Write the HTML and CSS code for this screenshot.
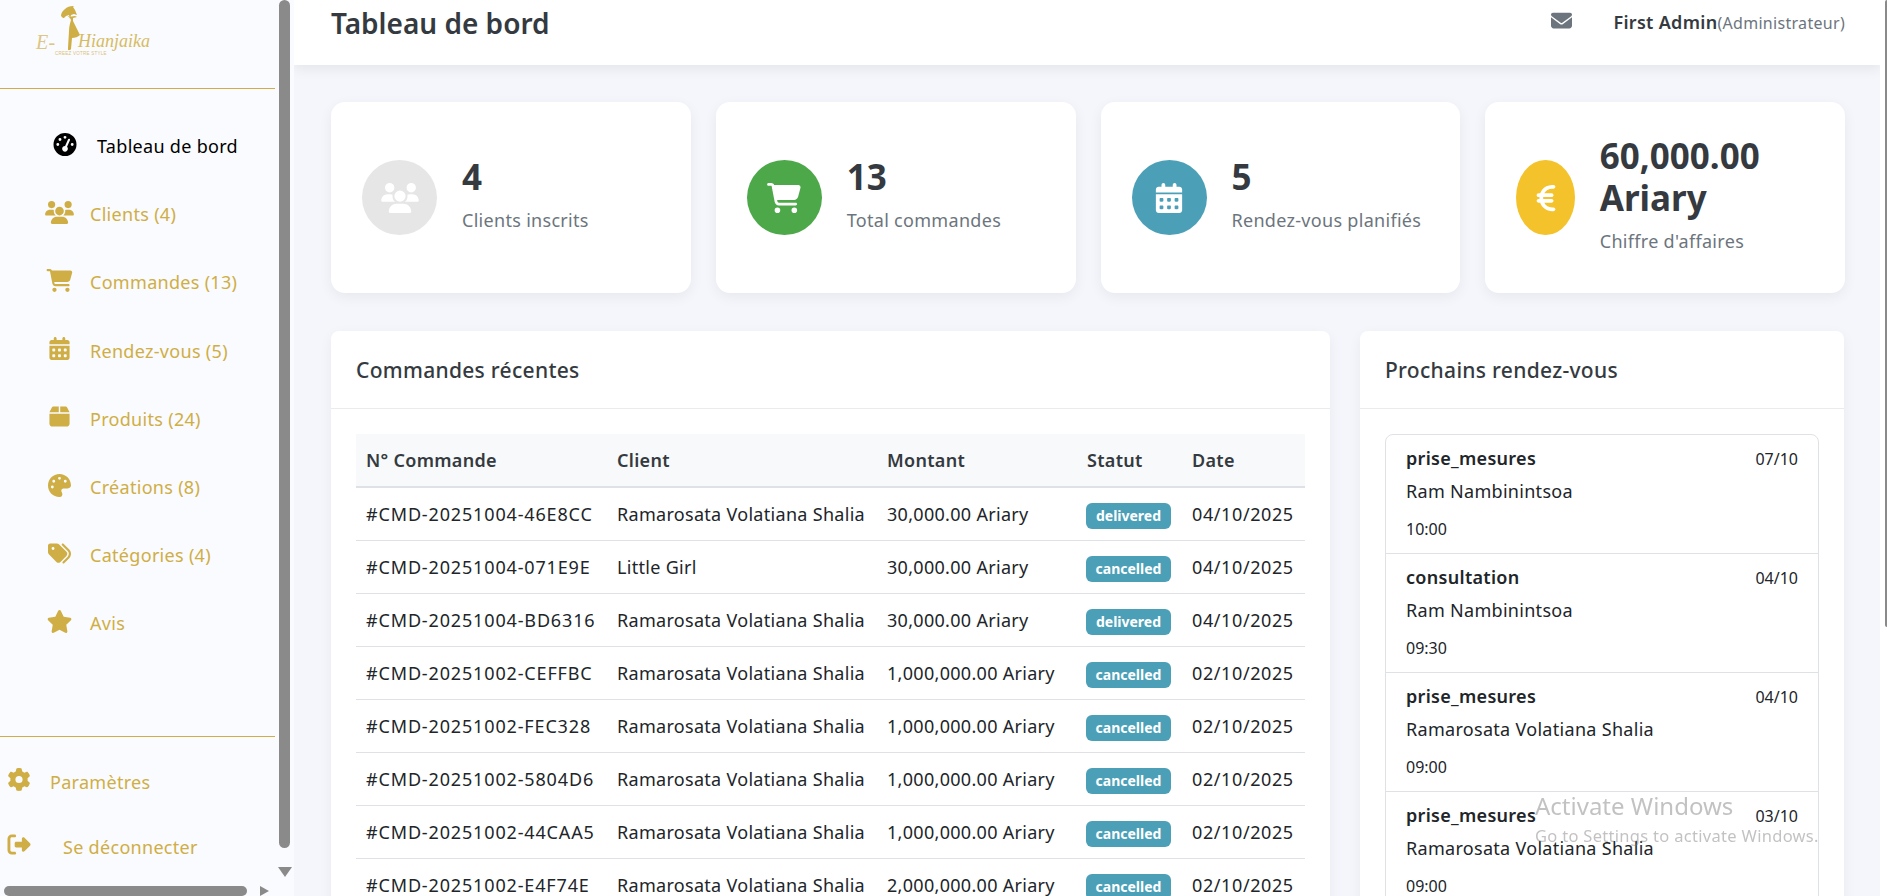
FILE: index.html
```html
<!DOCTYPE html>
<html lang="fr">
<head>
  <meta charset="UTF-8">
  <title>Tableau de bord</title>
  <link rel="stylesheet" href="styles.css">
</head>
<body>
  <svg class="sprite" xmlns="http://www.w3.org/2000/svg">
    <symbol id="i-gauge" viewBox="0 0 512 512"><path d="M0 256a256 256 0 1 1 512 0A256 256 0 1 1 0 256zM288 96a32 32 0 1 0 -64 0 32 32 0 1 0 64 0zM256 416c35.3 0 64-28.7 64-64c0-17.4-6.9-33.1-18.1-44.6L366 161.7c5.3-12.1-.2-26.3-12.3-31.6s-26.3 .2-31.6 12.3L257.9 288c-.6 0-1.3 0-1.9 0c-35.3 0-64 28.7-64 64s28.7 64 64 64zM176 144a32 32 0 1 0 -64 0 32 32 0 1 0 64 0zM96 288a32 32 0 1 0 0-64 32 32 0 1 0 0 64zm352-32a32 32 0 1 0 -64 0 32 32 0 1 0 64 0z"/></symbol>
    <symbol id="i-users" viewBox="0 0 640 512"><path d="M144 0a80 80 0 1 1 0 160A80 80 0 1 1 144 0zM512 0a80 80 0 1 1 0 160A80 80 0 1 1 512 0zM0 298.7C0 239.8 47.8 192 106.7 192h42.7c15.9 0 31 3.5 44.6 9.7c-1.3 7.2-1.9 14.7-1.9 22.3c0 38.2 16.8 72.5 43.3 96c-.2 0-.4 0-.7 0H21.3C9.6 320 0 310.4 0 298.7zM405.3 320c-.2 0-.4 0-.7 0c26.6-23.5 43.3-57.8 43.3-96c0-7.6-.7-15-1.9-22.3c13.6-6.3 28.7-9.7 44.6-9.7h42.7C592.2 192 640 239.8 640 298.7c0 11.8-9.6 21.3-21.3 21.3H405.3zM224 224a96 96 0 1 1 192 0 96 96 0 1 1 -192 0zM128 485.3C128 411.7 187.7 352 261.3 352H378.7C452.3 352 512 411.7 512 485.3c0 14.7-11.9 26.7-26.7 26.7H154.7c-14.7 0-26.7-11.9-26.7-26.7z"/></symbol>
    <symbol id="i-cart" viewBox="0 0 576 512"><path d="M0 24C0 10.7 10.7 0 24 0H69.5c22 0 41.5 12.8 50.6 32h411c26.3 0 45.5 25 38.6 50.4l-41 152.3c-8.5 31.4-37 53.3-69.5 53.3H170.7l5.4 28.5c2.2 11.3 12.1 19.5 23.6 19.5H488c13.3 0 24 10.7 24 24s-10.7 24-24 24H199.7c-34.6 0-64.3-24.6-70.7-58.5L77.4 54.5c-.7-3.8-4-6.5-7.9-6.5H24C10.7 48 0 37.3 0 24zM128 464a48 48 0 1 1 96 0 48 48 0 1 1 -96 0zm336-48a48 48 0 1 1 0 96 48 48 0 1 1 0-96z"/></symbol>
    <symbol id="i-calendar" viewBox="0 0 448 512"><path d="M128 0c17.7 0 32 14.3 32 32V64H288V32c0-17.7 14.3-32 32-32s32 14.3 32 32V64h48c26.5 0 48 21.5 48 48v48H0V112C0 85.5 21.5 64 48 64H96V32c0-17.7 14.3-32 32-32zM0 192H448V464c0 26.5-21.5 48-48 48H48c-26.5 0-48-21.5-48-48V192zm64 80v32c0 8.8 7.2 16 16 16h32c8.8 0 16-7.2 16-16V272c0-8.8-7.2-16-16-16H80c-8.8 0-16 7.2-16 16zm128 0v32c0 8.8 7.2 16 16 16h32c8.8 0 16-7.2 16-16V272c0-8.8-7.2-16-16-16H208c-8.8 0-16 7.2-16 16zm144-16c-8.8 0-16 7.2-16 16v32c0 8.8 7.2 16 16 16h32c8.8 0 16-7.2 16-16V272c0-8.8-7.2-16-16-16H336zM64 400v32c0 8.8 7.2 16 16 16h32c8.8 0 16-7.2 16-16V400c0-8.8-7.2-16-16-16H80c-8.8 0-16 7.2-16 16zm144-16c-8.8 0-16 7.2-16 16v32c0 8.8 7.2 16 16 16h32c8.8 0 16-7.2 16-16V400c0-8.8-7.2-16-16-16H208zm112 16v32c0 8.8 7.2 16 16 16h32c8.8 0 16-7.2 16-16V400c0-8.8-7.2-16-16-16H336c-8.8 0-16 7.2-16 16z"/></symbol>
    <symbol id="i-box" viewBox="0 0 448 512"><path d="M50.7 58.5L0 160H208V32H93.7C75.5 32 58.9 42.3 50.7 58.5zM240 160H448L397.3 58.5C389.1 42.3 372.5 32 354.3 32H240V160zm208 32H0V416c0 35.3 28.7 64 64 64H384c35.3 0 64-28.7 64-64V192z"/></symbol>
    <symbol id="i-palette" viewBox="0 0 512 512"><path d="M512 256c0 .9 0 1.8 0 2.7c-.4 36.5-33.6 61.3-70.1 61.3H344c-26.5 0-48 21.5-48 48c0 3.4 .4 6.7 1 9.9c2.1 10.2 6.5 20 10.8 29.9c6.1 13.8 12.1 27.5 12.1 42c0 31.8-21.6 60.7-53.4 62c-3.5 .1-7 .2-10.6 .2C114.6 512 0 397.4 0 256S114.6 0 256 0S512 114.6 512 256zM128 288a32 32 0 1 0 -64 0 32 32 0 1 0 64 0zm0-96a32 32 0 1 0 0-64 32 32 0 1 0 0 64zM288 96a32 32 0 1 0 -64 0 32 32 0 1 0 64 0zm96 96a32 32 0 1 0 0-64 32 32 0 1 0 0 64z"/></symbol>
    <symbol id="i-tags" viewBox="0 0 512 512"><path d="M345 39.1L472.8 168.4c52.4 53 52.4 138.2 0 191.2L360.8 472.9c-9.3 9.4-24.5 9.5-33.9 .2s-9.5-24.5-.2-33.9L438.6 325.9c33.9-34.3 33.9-89.4 0-123.7L310.9 72.9c-9.3-9.4-9.2-24.6 .2-33.9s24.6-9.2 33.9 .2zM0 229.5V80C0 53.5 21.5 32 48 32H197.5c17 0 33.3 6.7 45.3 18.7l168 168c25 25 25 65.5 0 90.5L277.3 442.7c-25 25-65.5 25-90.5 0l-168-168C6.7 262.7 0 246.5 0 229.5zM144 144a32 32 0 1 0 -64 0 32 32 0 1 0 64 0z"/></symbol>
    <symbol id="i-star" viewBox="0 0 576 512"><path d="M316.9 18C311.6 7 300.4 0 288.1 0s-23.4 7-28.8 18L195 150.3 51.4 171.5c-12 1.8-22 10.2-25.7 21.7s-.7 24.2 7.9 32.7L137.8 329 113.2 474.7c-2 12 3 24.2 12.9 31.3s23 8 33.8 2.3l128.3-68.5 128.3 68.5c10.8 5.7 23.9 4.9 33.8-2.3s14.9-19.3 12.9-31.3L438.5 329 542.7 225.9c8.6-8.5 11.7-21.2 7.9-32.7s-13.7-19.9-25.7-21.7L381.2 150.3 316.9 18z"/></symbol>
    <symbol id="i-gear" viewBox="0 0 512 512"><path d="M495.9 166.6c3.2 8.7 .5 18.4-6.4 24.6l-43.3 39.4c1.1 8.3 1.7 16.8 1.7 25.4s-.6 17.1-1.7 25.4l43.3 39.4c6.9 6.2 9.6 15.9 6.4 24.6c-4.4 11.9-9.7 23.3-15.8 34.3l-4.7 8.1c-6.6 11-14 21.4-22.1 31.2c-5.9 7.2-15.7 9.6-24.5 6.8l-55.7-17.7c-13.4 10.3-28.2 18.9-44 25.4l-12.5 57.1c-2 9.1-9 16.3-18.2 17.8c-13.8 2.3-28 3.5-42.5 3.5s-28.7-1.2-42.5-3.5c-9.2-1.5-16.2-8.7-18.2-17.8l-12.5-57.1c-15.8-6.5-30.6-15.1-44-25.4L83.1 425.9c-8.8 2.8-18.6 .3-24.5-6.8c-8.1-9.8-15.5-20.2-22.1-31.2l-4.7-8.1c-6.1-11-11.4-22.4-15.8-34.3c-3.2-8.7-.5-18.4 6.4-24.6l43.3-39.4C64.6 273.1 64 264.6 64 256s.6-17.1 1.7-25.4L22.4 191.2c-6.9-6.2-9.6-15.9-6.4-24.6c4.4-11.9 9.7-23.3 15.8-34.3l4.7-8.1c6.6-11 14-21.4 22.1-31.2c5.9-7.2 15.7-9.6 24.5-6.8l55.7 17.7c13.4-10.3 28.2-18.9 44-25.4l12.5-57.1c2-9.1 9-16.3 18.2-17.8C227.3 1.2 241.5 0 256 0s28.7 1.2 42.5 3.5c9.2 1.5 16.2 8.7 18.2 17.8l12.5 57.1c15.8 6.5 30.6 15.1 44 25.4l55.7-17.7c8.8-2.8 18.6-.3 24.5 6.8c8.1 9.8 15.5 20.2 22.1 31.2l4.7 8.1c6.1 11 11.4 22.4 15.8 34.3zM256 336a80 80 0 1 0 0-160 80 80 0 1 0 0 160z"/></symbol>
    <symbol id="i-out" viewBox="0 0 512 512"><path d="M377.9 105.9L500.7 228.7c7.2 7.2 11.3 17.1 11.3 27.3s-4.1 20.1-11.3 27.3L377.9 406.1c-6.4 6.4-15 9.9-24 9.9c-18.7 0-33.9-15.2-33.9-33.9l0-62.1-128 0c-17.7 0-32-14.3-32-32l0-64c0-17.7 14.3-32 32-32l128 0 0-62.1c0-18.7 15.2-33.9 33.9-33.9c9 0 17.6 3.6 24 9.9zM160 96L96 96c-17.7 0-32 14.3-32 32l0 256c0 17.7 14.3 32 32 32l64 0c17.7 0 32 14.3 32 32s-14.3 32-32 32l-64 0c-53 0-96-43-96-96L0 128C0 75 43 32 96 32l64 0c17.7 0 32 14.3 32 32s-14.3 32-32 32z"/></symbol>
    <symbol id="i-mail" viewBox="0 0 512 512"><path d="M48 64C21.5 64 0 85.5 0 112c0 15.1 7.1 29.3 19.2 38.4L236.8 313.6c11.4 8.5 27 8.5 38.4 0L492.8 150.4c12.1-9.1 19.2-23.3 19.2-38.4c0-26.5-21.5-48-48-48H48zM0 176V384c0 35.3 28.7 64 64 64H448c35.3 0 64-28.7 64-64V176L294.4 339.2c-22.8 17.1-52 17.1-76.8 0L0 176z"/></symbol>
    <symbol id="i-euro" viewBox="0 0 320 512"><path d="M48.1 240c-.1 2.7-.1 5.3-.1 8v16c0 2.7 0 5.3 .1 8H32c-17.7 0-32 14.3-32 32s14.3 32 32 32H60.3C89.9 419.9 170 480 264 480h24c17.7 0 32-14.3 32-32s-14.3-32-32-32H264c-57.9 0-108.2-32.4-133.9-80H256c17.7 0 32-14.3 32-32s-14.3-32-32-32H112.2c-.1-2.6-.2-5.3-.2-8V248c0-2.7 .1-5.4 .2-8H256c17.7 0 32-14.3 32-32s-14.3-32-32-32H130.1c25.7-47.6 76-80 133.9-80h24c17.7 0 32-14.3 32-32s-14.3-32-32-32H264C170 32 89.9 92.1 60.3 176H32c-17.7 0-32 14.3-32 32s14.3 32 32 32H48.1z"/></symbol>
    <!-- lady with a parasol from the logo -->
    <symbol id="i-figure" viewBox="0 0 24 46">
      <path d="M1 11C1 6 7 1 13 1c1 0 1 1 0 1l2 3 2 5-3-1-3 1-1 4-1-4-3 1-2 2-1 0z"/>
      <path d="M8 12l7-1 2 1-4 1 0 3 1 2 1 2 5 10c-2 2-5 3-8 3l-1 11c0 1-2 1-3 1l0-2 1-17c0-4 1-8 2-11l-1-2-2-2z"/>
    </symbol>
  </svg>

  <div class="app">
    <aside class="sidebar">
      <div class="logo">
        <div class="logo-row">
          <span class="logo-e">E-</span>
          <svg class="logo-figure"><use href="#i-figure"/></svg>
          <span class="logo-name">Hianjaika</span>
        </div>
        <div class="logo-tag">CREEZ VOTRE STYLE</div>
      </div>

      <nav class="side-nav">
        <a class="side-link active"><svg class="ic"><use href="#i-gauge"/></svg><span>Tableau de bord</span></a>
        <a class="side-link"><svg class="ic"><use href="#i-users"/></svg><span>Clients (4)</span></a>
        <a class="side-link"><svg class="ic"><use href="#i-cart"/></svg><span>Commandes (13)</span></a>
        <a class="side-link"><svg class="ic"><use href="#i-calendar"/></svg><span>Rendez-vous (5)</span></a>
        <a class="side-link"><svg class="ic"><use href="#i-box"/></svg><span>Produits (24)</span></a>
        <a class="side-link"><svg class="ic"><use href="#i-palette"/></svg><span>Créations (8)</span></a>
        <a class="side-link"><svg class="ic"><use href="#i-tags"/></svg><span>Catégories (4)</span></a>
        <a class="side-link"><svg class="ic"><use href="#i-star"/></svg><span>Avis</span></a>
      </nav>

      <div class="side-foot">
        <a class="foot-link"><svg class="ic"><use href="#i-gear"/></svg><span>Paramètres</span></a>
        <a class="foot-link logout"><svg class="ic"><use href="#i-out"/></svg><span>Se déconnecter</span></a>
      </div>

      <!-- browser scrollbars of the sidebar -->
      <div class="sb-thumb-v"></div>
      <div class="sb-arrow-down"></div>
      <div class="sb-thumb-h"></div>
      <div class="sb-arrow-right"></div>
    </aside>

    <main class="main">
      <header class="topbar">
        <h1>Tableau de bord</h1>
        <div class="top-right">
          <svg class="ic-mail"><use href="#i-mail"/></svg>
          <div class="user"><strong>First Admin</strong><span>(Administrateur)</span></div>
        </div>
      </header>

      <section class="stats">
        <div class="stat">
          <div class="stat-icon grey"><svg><use href="#i-users"/></svg></div>
          <div class="stat-text"><div class="stat-num">4</div><div class="stat-label">Clients inscrits</div></div>
        </div>
        <div class="stat">
          <div class="stat-icon green"><svg><use href="#i-cart"/></svg></div>
          <div class="stat-text"><div class="stat-num">13</div><div class="stat-label">Total commandes</div></div>
        </div>
        <div class="stat">
          <div class="stat-icon teal"><svg><use href="#i-calendar"/></svg></div>
          <div class="stat-text"><div class="stat-num">5</div><div class="stat-label">Rendez-vous planifiés</div></div>
        </div>
        <div class="stat">
          <div class="stat-icon yellow"><svg><use href="#i-euro"/></svg></div>
          <div class="stat-text"><div class="stat-num">60,000.00 Ariary</div><div class="stat-label">Chiffre d'affaires</div></div>
        </div>
      </section>

      <section class="panels">
        <div class="panel">
          <div class="panel-head">Commandes récentes</div>
          <div class="panel-body">
            <table class="orders">
              <colgroup><col class="c1"><col class="c2"><col class="c3"><col class="c4"><col class="c5"></colgroup>
              <thead>
                <tr><th>N° Commande</th><th>Client</th><th>Montant</th><th>Statut</th><th>Date</th></tr>
              </thead>
              <tbody>
                <tr><td class="ref">#CMD-20251004-46E8CC</td><td>Ramarosata Volatiana Shalia</td><td>30,000.00 Ariary</td><td><span class="badge">delivered</span></td><td class="date">04/10/2025</td></tr>
                <tr><td class="ref">#CMD-20251004-071E9E</td><td>Little Girl</td><td>30,000.00 Ariary</td><td><span class="badge">cancelled</span></td><td class="date">04/10/2025</td></tr>
                <tr><td class="ref">#CMD-20251004-BD6316</td><td>Ramarosata Volatiana Shalia</td><td>30,000.00 Ariary</td><td><span class="badge">delivered</span></td><td class="date">04/10/2025</td></tr>
                <tr><td class="ref">#CMD-20251002-CEFFBC</td><td>Ramarosata Volatiana Shalia</td><td>1,000,000.00 Ariary</td><td><span class="badge">cancelled</span></td><td class="date">02/10/2025</td></tr>
                <tr><td class="ref">#CMD-20251002-FEC328</td><td>Ramarosata Volatiana Shalia</td><td>1,000,000.00 Ariary</td><td><span class="badge">cancelled</span></td><td class="date">02/10/2025</td></tr>
                <tr><td class="ref">#CMD-20251002-5804D6</td><td>Ramarosata Volatiana Shalia</td><td>1,000,000.00 Ariary</td><td><span class="badge">cancelled</span></td><td class="date">02/10/2025</td></tr>
                <tr><td class="ref">#CMD-20251002-44CAA5</td><td>Ramarosata Volatiana Shalia</td><td>1,000,000.00 Ariary</td><td><span class="badge">cancelled</span></td><td class="date">02/10/2025</td></tr>
                <tr><td class="ref">#CMD-20251002-E4F74E</td><td>Ramarosata Volatiana Shalia</td><td>2,000,000.00 Ariary</td><td><span class="badge">cancelled</span></td><td class="date">02/10/2025</td></tr>
              </tbody>
            </table>
          </div>
        </div>

        <div class="panel side-panel">
          <div class="panel-head">Prochains rendez-vous</div>
          <div class="panel-body">
            <div class="rdv-list">
              <div class="rdv">
                <div class="rdv-top"><strong>prise_mesures</strong><small>07/10</small></div>
                <p>Ram Nambinintsoa</p>
                <small>10:00</small>
              </div>
              <div class="rdv">
                <div class="rdv-top"><strong>consultation</strong><small>04/10</small></div>
                <p>Ram Nambinintsoa</p>
                <small>09:30</small>
              </div>
              <div class="rdv">
                <div class="rdv-top"><strong>prise_mesures</strong><small>04/10</small></div>
                <p>Ramarosata Volatiana Shalia</p>
                <small>09:00</small>
              </div>
              <div class="rdv">
                <div class="rdv-top"><strong>prise_mesures</strong><small>03/10</small></div>
                <p>Ramarosata Volatiana Shalia</p>
                <small>09:00</small>
              </div>
            </div>
          </div>
        </div>
      </section>

      <div class="page-scroll"><div class="page-thumb"></div></div>
    </main>
  </div>

  <div class="watermark">
    <div class="wm-title">Activate Windows</div>
    <div class="wm-sub">Go to Settings to activate Windows.</div>
  </div>
</body>
</html>
```

FILE: styles.css
```css
* { box-sizing: border-box; }
html, body { margin: 0; height: 100%; overflow: hidden; }
body { font-family: "Noto Sans", "Open Sans", Arial, sans-serif; font-size: 18px; line-height: 24px; letter-spacing: .3px; color: #212529; background: #f4f6fb; }
.sprite { display: none; }
svg { fill: currentColor; }

.app { display: flex; height: 896px; }

/* sidebar */
.sidebar { position: relative; flex: 0 0 294px; width: 294px; height: 896px; background: #fafbfe; color: #cfae45; overflow: hidden; }
.logo { width: 275px; height: 89px; border-bottom: 1px solid #cfae45; padding: 5px 0 0 36px; }
.logo-row { display: flex; align-items: flex-end; height: 46px; }
.logo-e { font-family: "Liberation Serif", serif; font-style: italic; font-size: 20px; line-height: 18px; width: 24px; color: #dcc681; }
.logo-figure { flex: 0 0 24px; width: 24px; height: 46px; color: #cfae45; }
.logo-name { font-family: "Liberation Serif", serif; font-style: italic; font-size: 18px; line-height: 20px; letter-spacing: 0; margin-left: -6px; color: #d6bb63; }
.logo-tag { font-family: "Liberation Sans", sans-serif; font-size: 4.5px; line-height: 6px; letter-spacing: .25px; margin: 0 0 0 19px; color: #d9c078; }

.side-nav { display: flex; flex-direction: column; padding-top: 23px; }
.side-link { display: flex; align-items: center; height: 68.2px; padding-left: 45px; }
.side-link .ic { flex: 0 0 29px; width: 29px; height: 23px; margin-top: -4px; }
.side-link span { margin-left: 16px; }
.side-link.active { color: #000; padding-left: 53px; }
.side-link.active .ic { flex-basis: 24px; width: 24px; }
.side-link.active span { margin-left: 20px; }

.side-foot { position: absolute; left: 0; right: 19px; top: 736px; border-top: 1px solid #cfae45; padding-top: 12px; }
.foot-link { display: flex; align-items: center; height: 65px; padding-left: 7px; }
.foot-link .ic { flex: 0 0 24px; width: 24px; height: 23px; margin-top: -4px; }
.foot-link span { margin-left: 19px; }
.foot-link.logout span { margin-left: 32px; }

.sb-thumb-v { position: absolute; left: 279px; top: 0; width: 11px; height: 848px; background: #8a8a8a; border-radius: 6px; }
.sb-arrow-down { position: absolute; left: 278px; top: 867px; border-left: 7px solid transparent; border-right: 7px solid transparent; border-top: 10px solid #8a8a8a; }
.sb-thumb-h { position: absolute; left: 4px; top: 886px; width: 243px; height: 10px; background: #8a8a8a; border-radius: 6px; }
.sb-arrow-right { position: absolute; left: 260px; top: 886px; border-top: 5px solid transparent; border-bottom: 5px solid transparent; border-left: 9px solid #8a8a8a; }

/* main */
.main { position: relative; flex: 1; min-width: 0; padding-right: 7px; height: 896px; overflow: hidden; }
.topbar { display: flex; justify-content: space-between; height: 65px; background: #fff; padding: 0 35px 0 37px; box-shadow: 0 4px 12px rgba(0, 0, 0, .07); }
.topbar h1 { margin: 3px 0 0; font-size: 28px; line-height: 40px; font-weight: 600; letter-spacing: 0; color: #343a40; }
.top-right { display: flex; align-items: flex-start; padding-top: 10px; }
.ic-mail { width: 21px; height: 21px; color: #6c757d; margin-right: 41px; }
.user { line-height: 22px; margin-top: 1px; }
.user strong { font-weight: 600; color: #343a40; }
.user span { font-size: 16px; color: #6c757d; }

.stats { display: grid; grid-template-columns: repeat(4, 1fr); gap: 25px; padding: 37px 35px 0 37px; }
.stat { display: flex; align-items: center; gap: 25px; height: 191px; padding: 0 30px 0 31px; background: #fff; border-radius: 14px; box-shadow: 0 4px 14px rgba(0, 0, 0, .06); }
.stat-icon { flex: 0 1 75px; width: 75px; height: 75px; border-radius: 50%; display: flex; align-items: center; justify-content: center; color: #fff; }
.stat-icon svg { width: 38px; height: 30px; }
.stat-text { margin-top: -8px; }
.grey { background: #e6e6e6; }
.green { background: #4ca849; }
.teal { background: #4ba0b8; }
.yellow { background: #f4c22b; }
.stat-num { font-size: 35px; line-height: 42px; font-weight: 700; letter-spacing: 0; color: #343a40; }
.stat-label { margin-top: 10px; font-size: 18px; line-height: 24px; color: #6c757d; }

.panels { display: grid; grid-template-columns: 999px 484px; gap: 30px; padding: 38px 36px 0 37px; }
.panel { background: #fff; border-radius: 8px; box-shadow: 0 4px 14px rgba(0, 0, 0, .05); }
.panel-head { height: 78px; padding: 0 25px; display: flex; align-items: center; font-size: 21px; font-weight: 500; color: #343a40; border-bottom: 1px solid #e9ecef; }
.panel-body { padding: 25px; }

.orders { width: 949px; border-collapse: collapse; table-layout: fixed; }
.c1 { width: 251px; } .c2 { width: 270px; } .c3 { width: 200px; } .c4 { width: 105px; } .c5 { width: 123px; }
.orders th { height: 53px; padding: 0 10px; text-align: left; font-weight: 600; color: #343a40; background: #f8f9fa; border-bottom: 2px solid #dee2e6; }
.orders td { height: 53px; padding: 0 10px; border-bottom: 1px solid #dee2e6; white-space: nowrap; }
.orders .ref { letter-spacing: .85px; }
.orders .date { letter-spacing: .6px; }
.badge { display: inline-flex; align-items: center; justify-content: center; width: 85px; height: 26px; margin: 4px 0 0 -1px; border-radius: 6px; background: #4ba0b8; color: #fff; font-size: 14px; font-weight: 700; letter-spacing: 0; vertical-align: middle; }

.rdv-list { border: 1px solid #dee2e6; border-radius: 8px; }
.rdv { height: 119px; padding: 7px 20px 0; border-bottom: 1px solid #dee2e6; }
.rdv-top { display: flex; justify-content: space-between; align-items: center; height: 32px; }
.rdv-top strong { font-weight: 600; }
.rdv small { font-size: 16px; letter-spacing: 0; }
.rdv-top small { margin-top: 1px; }
.rdv p { margin: 2px 0 0; line-height: 30px; }
.rdv > small { display: block; margin-top: 12px; line-height: 22px; }

.page-scroll { position: absolute; right: 0; top: 0; width: 7px; height: 896px; background: #fff; }
.page-thumb { width: 3px; height: 627px; margin-left: 5px; background: #8a8a8a; border-radius: 2px 0 0 2px; }

.watermark { position: fixed; left: 1535px; top: 790px; width: 284px; overflow: hidden; white-space: nowrap; color: rgba(120, 120, 120, .45); }
.wm-title { font-size: 24px; line-height: 32px; letter-spacing: 0; }
.wm-sub { font-size: 16.5px; line-height: 26px; margin-top: 1px; }
```
